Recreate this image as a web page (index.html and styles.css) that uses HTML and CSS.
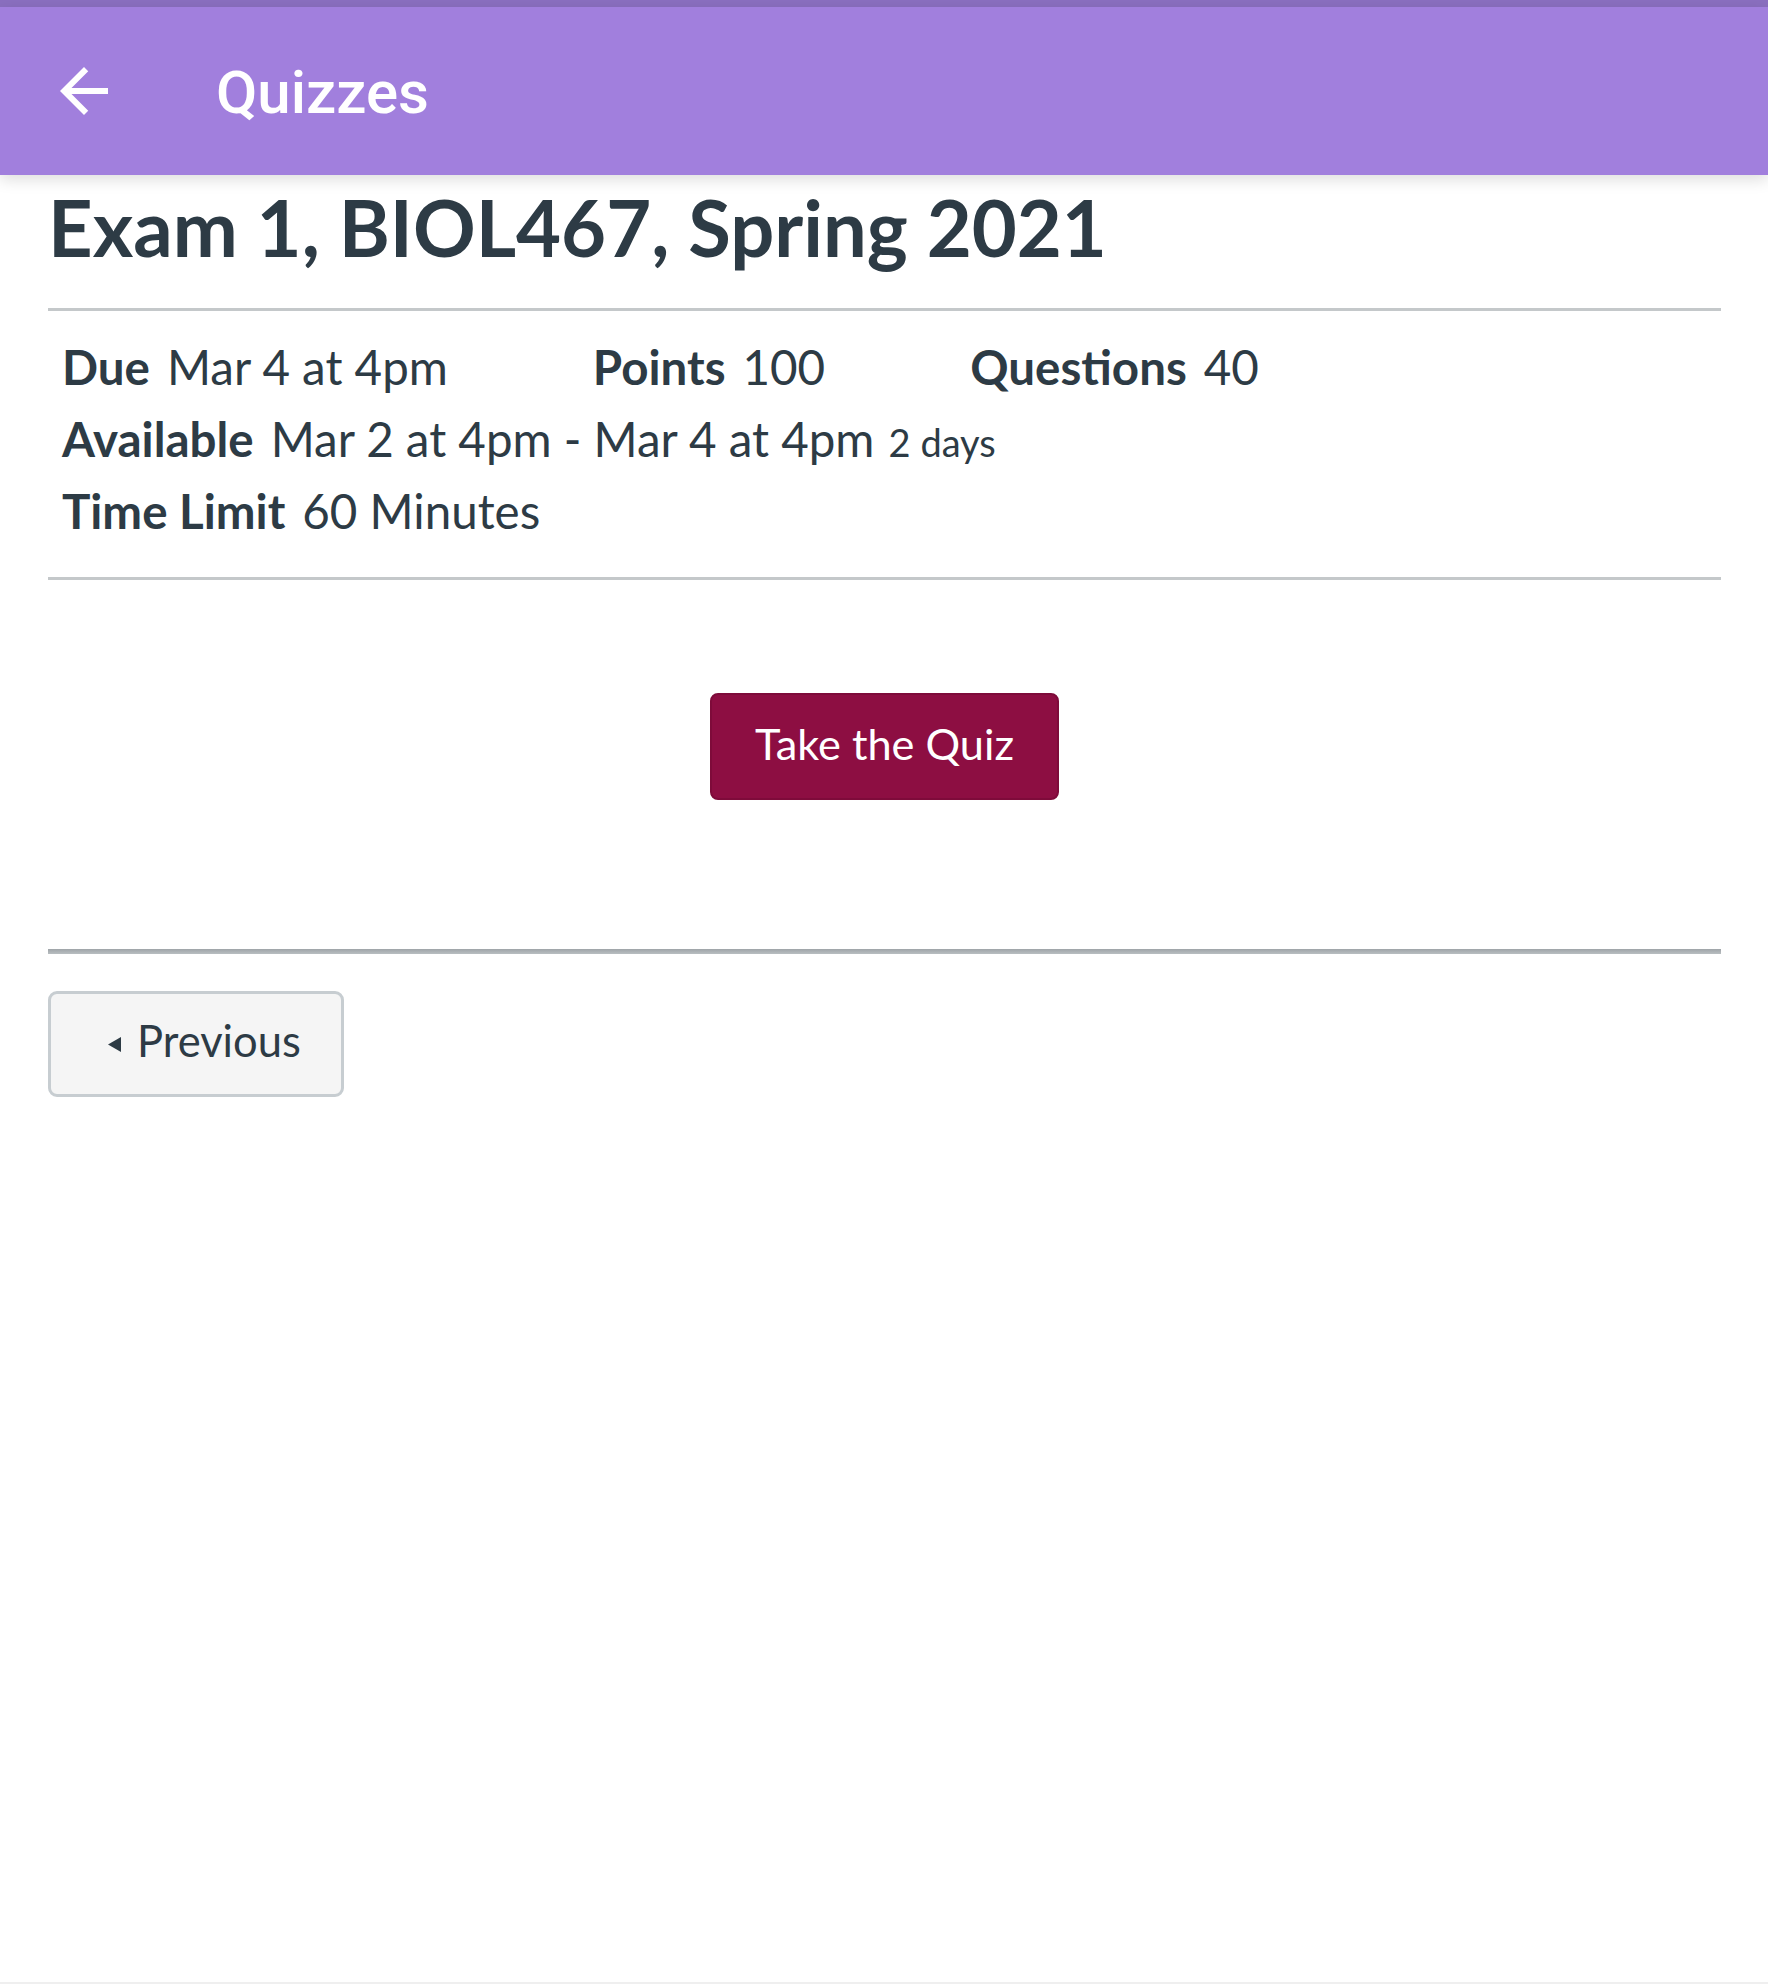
FILE: index.html
```html
<!DOCTYPE html>
<html>
<head>
<meta charset="utf-8">
<link rel="stylesheet" href="styles.css">
</head>
<body>
<div class="status"></div>
<header class="toolbar">
  <svg class="back" viewBox="0 0 24 24" width="72" height="72"><path d="M20 11H7.83l5.59-5.59L12 4l-8 8 8 8 1.41-1.41L7.83 13H20v-2z" fill="#fff"/></svg>
  <div class="toolbar-title">Quizzes</div>
</header>
<main class="content">
  <h1 class="title">Exam 1, BIOL467, Spring 2021</h1>
  <div class="rule"></div>
  <div class="details">
    <div class="row">
      <div class="item"><span class="label">Due</span><span class="value">Mar 4 at 4pm</span></div>
      <div class="item"><span class="label">Points</span><span class="value">100</span></div>
      <div class="item"><span class="label">Questions</span><span class="value">40</span></div>
    </div>
    <div class="row">
      <div class="item"><span class="label">Available</span><span class="value">Mar 2 at 4pm - Mar 4 at 4pm <span class="small">2 days</span></span></div>
    </div>
    <div class="row">
      <div class="item"><span class="label">Time Limit</span><span class="value">60 Minutes</span></div>
    </div>
  </div>
  <div class="rule"></div>
  <div class="actions">
    <button class="take">Take the Quiz</button>
  </div>
  <div class="rule thick"></div>
  <div class="nav">
    <button class="prev"><svg class="tri" viewBox="0 0 13 15" width="13" height="15"><polygon points="13,0 13,15 0,7.5" fill="#2d3b45"/></svg>Previous</button>
  </div>
</main>
<div class="bottom-line"></div>
</body>
</html>
```

FILE: styles.css
```css
html, body {
  margin: 0;
  padding: 0;
  background: #ffffff;
}
body {
  width: 1768px;
  height: 1984px;
  position: relative;
  overflow: hidden;
  font-family: Lato, "Liberation Sans", sans-serif;
  color: #2d3b45;
}
.status {
  height: 7px;
  background: #8a6fbf;
}
.toolbar {
  position: relative;
  z-index: 2;
  height: 168px;
  background: #a17fdd;
  display: flex;
  align-items: center;
  padding-left: 48px;
  box-shadow: 0 5px 14px rgba(0, 0, 0, 0.13);
}
.back {
  display: block;
  flex: none;
}
.toolbar-title {
  margin-left: 96px;
  font-family: Roboto, "Noto Sans", sans-serif;
  font-weight: 500;
  font-size: 60px;
  color: #ffffff;
  line-height: 1;
  padding-top: 4px;
}
.content {
  padding: 0 47px 0 48px;
}
.title {
  margin: 4px 0 0 0;
  font-family: Lato, sans-serif;
  font-weight: 700;
  font-size: 77.7px;
  line-height: 96px;
  color: #2d3b45;
}
.rule {
  height: 3px;
  background: #c4c8ca;
  margin-top: 33px;
}
.details {
  padding: 20px 15px 0 14px;
  height: 266px;
  box-sizing: border-box;
}
.row {
  display: flex;
  gap: 145px;
  font-size: 47.5px;
  line-height: 72px;
  height: 72px;
  white-space: nowrap;
}
.label {
  font-weight: 700;
}
.value {
  margin-left: 17px;
  font-weight: 400;
}
.small {
  font-size: 38px;
  margin-left: 2px;
}
.details + .rule {
  margin-top: 0;
}
.actions {
  display: flex;
  justify-content: center;
  padding-top: 113px;
  padding-bottom: 149px;
}
.take {
  font-family: Lato, sans-serif;
  font-size: 43.3px;
  line-height: 50px;
  color: #ffffff;
  background: #8d0e42;
  border: 2px solid #7e0b3a;
  border-radius: 8px;
  padding: 23px 43px 30px 43px;
  margin: 0;
}
.rule.thick {
  margin-top: 0;
  height: 5px;
  background: linear-gradient(#9ea4a8, #b9bec1);
}
.nav {
  padding-top: 37px;
  display: flex;
}
.prev {
  display: flex;
  align-items: center;
  font-family: Lato, sans-serif;
  font-size: 43.5px;
  line-height: 50px;
  color: #2d3b45;
  background: #f5f5f5;
  border: 3px solid #c7cdd1;
  border-radius: 9px;
  padding: 21px 40px 29px 57px;
  margin: 0;
}
.tri {
  display: block;
  margin-right: 16px;
  margin-top: 8px;
}
.bottom-line {
  position: absolute;
  left: 0;
  right: 0;
  bottom: 0;
  height: 2px;
  background: #efefef;
}
```
